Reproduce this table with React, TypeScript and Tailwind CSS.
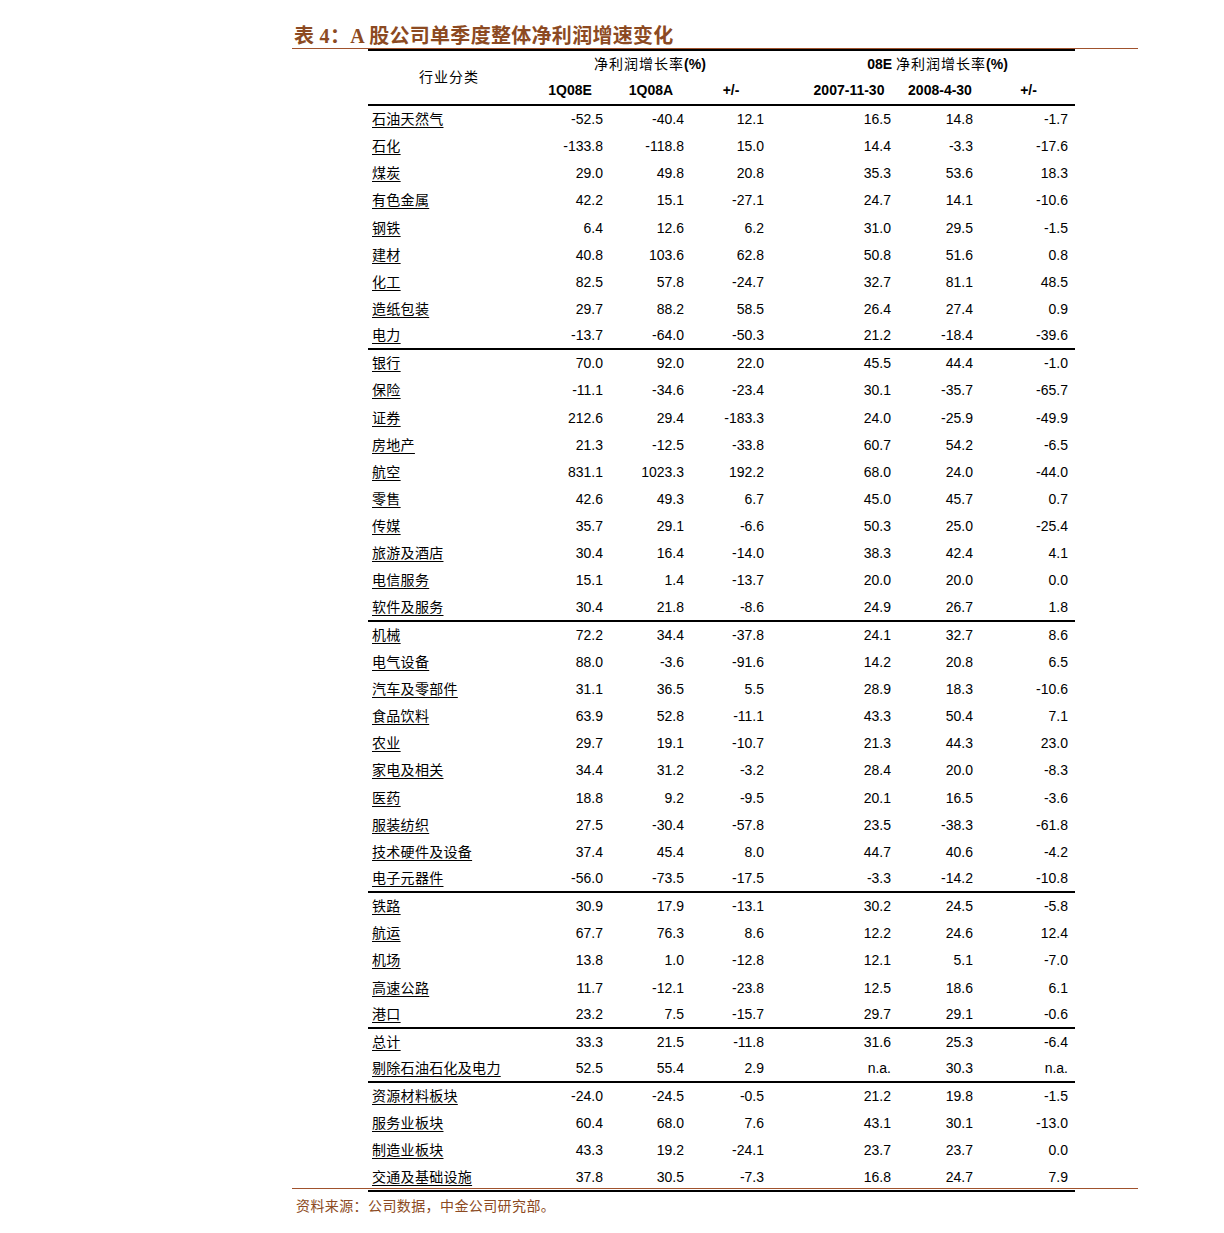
const rows: [string, string, string, string, string, string, string][] = [
  ["石油天然气", "-52.5", "-40.4", "12.1", "16.5", "14.8", "-1.7"],
  ["石化", "-133.8", "-118.8", "15.0", "14.4", "-3.3", "-17.6"],
  ["煤炭", "29.0", "49.8", "20.8", "35.3", "53.6", "18.3"],
  ["有色金属", "42.2", "15.1", "-27.1", "24.7", "14.1", "-10.6"],
  ["钢铁", "6.4", "12.6", "6.2", "31.0", "29.5", "-1.5"],
  ["建材", "40.8", "103.6", "62.8", "50.8", "51.6", "0.8"],
  ["化工", "82.5", "57.8", "-24.7", "32.7", "81.1", "48.5"],
  ["造纸包装", "29.7", "88.2", "58.5", "26.4", "27.4", "0.9"],
  ["电力", "-13.7", "-64.0", "-50.3", "21.2", "-18.4", "-39.6"],
  ["银行", "70.0", "92.0", "22.0", "45.5", "44.4", "-1.0"],
  ["保险", "-11.1", "-34.6", "-23.4", "30.1", "-35.7", "-65.7"],
  ["证券", "212.6", "29.4", "-183.3", "24.0", "-25.9", "-49.9"],
  ["房地产", "21.3", "-12.5", "-33.8", "60.7", "54.2", "-6.5"],
  ["航空", "831.1", "1023.3", "192.2", "68.0", "24.0", "-44.0"],
  ["零售", "42.6", "49.3", "6.7", "45.0", "45.7", "0.7"],
  ["传媒", "35.7", "29.1", "-6.6", "50.3", "25.0", "-25.4"],
  ["旅游及酒店", "30.4", "16.4", "-14.0", "38.3", "42.4", "4.1"],
  ["电信服务", "15.1", "1.4", "-13.7", "20.0", "20.0", "0.0"],
  ["软件及服务", "30.4", "21.8", "-8.6", "24.9", "26.7", "1.8"],
  ["机械", "72.2", "34.4", "-37.8", "24.1", "32.7", "8.6"],
  ["电气设备", "88.0", "-3.6", "-91.6", "14.2", "20.8", "6.5"],
  ["汽车及零部件", "31.1", "36.5", "5.5", "28.9", "18.3", "-10.6"],
  ["食品饮料", "63.9", "52.8", "-11.1", "43.3", "50.4", "7.1"],
  ["农业", "29.7", "19.1", "-10.7", "21.3", "44.3", "23.0"],
  ["家电及相关", "34.4", "31.2", "-3.2", "28.4", "20.0", "-8.3"],
  ["医药", "18.8", "9.2", "-9.5", "20.1", "16.5", "-3.6"],
  ["服装纺织", "27.5", "-30.4", "-57.8", "23.5", "-38.3", "-61.8"],
  ["技术硬件及设备", "37.4", "45.4", "8.0", "44.7", "40.6", "-4.2"],
  ["电子元器件", "-56.0", "-73.5", "-17.5", "-3.3", "-14.2", "-10.8"],
  ["铁路", "30.9", "17.9", "-13.1", "30.2", "24.5", "-5.8"],
  ["航运", "67.7", "76.3", "8.6", "12.2", "24.6", "12.4"],
  ["机场", "13.8", "1.0", "-12.8", "12.1", "5.1", "-7.0"],
  ["高速公路", "11.7", "-12.1", "-23.8", "12.5", "18.6", "6.1"],
  ["港口", "23.2", "7.5", "-15.7", "29.7", "29.1", "-0.6"],
  ["总计", "33.3", "21.5", "-11.8", "31.6", "25.3", "-6.4"],
  ["剔除石油石化及电力", "52.5", "55.4", "2.9", "n.a.", "30.3", "n.a."],
  ["资源材料板块", "-24.0", "-24.5", "-0.5", "21.2", "19.8", "-1.5"],
  ["服务业板块", "60.4", "68.0", "7.6", "43.1", "30.1", "-13.0"],
  ["制造业板块", "43.3", "19.2", "-24.1", "23.7", "23.7", "0.0"],
  ["交通及基础设施", "37.8", "30.5", "-7.3", "16.8", "24.7", "7.9"],
]

// rows after which a heavy rule is drawn
const breaks = new Set(["电力", "软件及服务", "电子元器件", "港口", "剔除石油石化及电力"])

const grid = "grid grid-cols-[162px_80px_82px_78px_30px_98px_84px_93px]"
const cjk = { fontFamily: '"Liberation Serif", "Noto Sans CJK SC", serif' }
const num = { fontFamily: '"Liberation Sans", Arial, sans-serif' }

export default function App() {
  return (
    <div className="min-h-screen bg-white text-black">
      <div className="pt-[22px] ml-[292px] w-[846px]">
        {/* Title */}
        <div
          className="pl-[2px] h-[26px] leading-[28px] text-[20px] font-bold tracking-[0.3px] text-[#8c4a22]"
          style={cjk}
        >
          表 4：A 股公司单季度整体净利润增速变化
        </div>
        <div className="h-px bg-[#a0522d]" />

        {/* Table */}
        <div className="ml-[76px] w-[707px] border-t-2 border-black text-[14px]" style={num}>
          <div className={grid + " h-[55px] border-b-2 border-black"}>
            <div
              className="row-span-2 flex items-center justify-center tracking-[1px] text-[14px]"
              style={cjk}
            >
              行业分类
            </div>
            <div className="col-span-3 flex items-center justify-center">
              <span style={cjk} className="tracking-[1px]">净利润增长率</span>
              <span className="font-bold">(%)</span>
            </div>
            <div />
            <div className="col-span-3 flex items-center justify-center">
              <span className="font-bold">08E</span>
              <span style={cjk} className="tracking-[1px] ml-[4px]">净利润增长率</span>
              <span className="font-bold">(%)</span>
            </div>
            <div className="flex items-center justify-center font-bold">1Q08E</div>
            <div className="flex items-center justify-center font-bold">1Q08A</div>
            <div className="flex items-center justify-center font-bold">+/-</div>
            <div />
            <div className="flex items-center justify-center font-bold">2007-11-30</div>
            <div className="flex items-center justify-center font-bold">2008-4-30</div>
            <div className="flex items-center justify-center font-bold">+/-</div>
          </div>

          {rows.map((r, i) => {
            const last = i === rows.length - 1
            const heavy = breaks.has(r[0]) || last
            return (
              <div
                key={r[0]}
                className={
                  grid +
                  " h-[27.15px] items-center " +
                  (heavy ? "border-b-2 border-black" : "")
                }
              >
                <div className="pl-[4px]">
                  <span
                    className="underline underline-offset-[3px] decoration-1 tracking-[0.3px] text-[14px]"
                    style={cjk}
                  >
                    {r[0]}
                  </span>
                </div>
                <div className="text-right pr-[7px]">{r[1]}</div>
                <div className="text-right pr-[8px]">{r[2]}</div>
                <div className="text-right pr-[6px]">{r[3]}</div>
                <div />
                <div className="text-right pr-[7px]">{r[4]}</div>
                <div className="text-right pr-[9px]">{r[5]}</div>
                <div className="text-right pr-[7px]">{r[6]}</div>
              </div>
            )
          })}
        </div>
        <div className="relative -mt-[4px] h-px bg-[#a0522d]" />

        {/* Source */}
        <div
          className="mt-[7px] pl-[4px] text-[14px] tracking-[0.4px] text-[#8c4a22]"
          style={cjk}
        >
          资料来源：公司数据，中金公司研究部。
        </div>
      </div>
    </div>
  )
}
